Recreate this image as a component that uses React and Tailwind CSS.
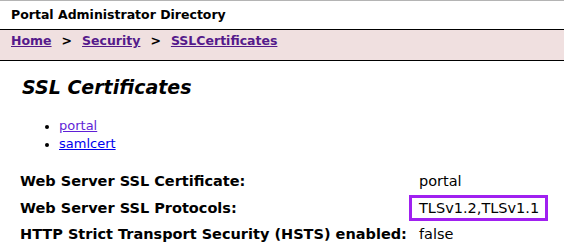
import React from 'react';

const rows = [
  { label: 'Web Server SSL Certificate:', value: 'portal' },
  { label: 'Web Server SSL Protocols:', value: 'TLSv1.2,TLSv1.1', marked: true },
  { label: 'HTTP Strict Transport Security (HSTS) enabled:', value: 'false' },
];

export default function App() {
  return (
    <div className="w-[564px] h-[251px] overflow-hidden bg-white text-black text-[13px] font-['DejaVu_Sans',Verdana,sans-serif]">
      {/* header */}
      <div className="h-[30px] border-t border-b border-t-[#b4b4b4] border-b-black px-[11px] flex items-center text-[12.5px] font-bold leading-none">
        Portal Administrator Directory
      </div>

      {/* breadcrumb */}
      <div className="h-[31px] bg-[#f0e0e0] border-b border-black px-[11px] pt-[3px] text-[12.5px] leading-[16px] font-bold">
        <a href="#" className="underline text-[#551a8b]">Home</a>
        <span className="mx-[10px]">&gt;</span>
        <a href="#" className="underline text-[#551a8b]">Security</a>
        <span className="mx-[10px]">&gt;</span>
        <a href="#" className="underline text-[#551a8b]">SSLCertificates</a>
      </div>

      <div className="pl-[22px] pt-[15px]">
        <h1 className="text-[19px] italic font-bold leading-[22px]">SSL Certificates</h1>

        <ul className="mt-[19px] pl-[37px] list-disc leading-[18px] marker:text-[12px]">
          <li><a href="#" className="underline text-[#5f1fd6]">portal</a></li>
          <li><a href="#" className="underline text-[#0000ee]">samlcert</a></li>
        </ul>
      </div>

      <div className="mt-[20px] pl-[20px] grid grid-cols-[399px_auto] gap-y-[9.5px] text-[14.5px] leading-[17px]">
        {rows.map((r) => (
          <React.Fragment key={r.label}>
            <div className="font-bold">{r.label}</div>
            <div>
              {r.marked ? (
                <span className="relative">
                  {r.value}
                  <span className="absolute -left-[10px] -right-[9px] -top-[5px] -bottom-[5px] border-[3px] border-[#a020f0]" />
                </span>
              ) : (
                r.value
              )}
            </div>
          </React.Fragment>
        ))}
      </div>
    </div>
  );
}
